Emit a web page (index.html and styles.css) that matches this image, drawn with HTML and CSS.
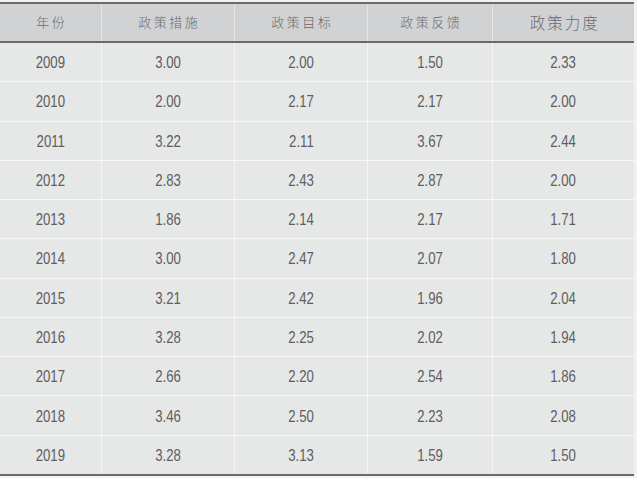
FILE: index.html
```html
<!DOCTYPE html>
<html lang="zh">
<head>
<meta charset="utf-8">
<link rel="stylesheet" href="styles.css">
</head>
<body>
<div class="tbl">
  <div class="row head">
    <div class="c">年份</div>
    <div class="c">政策措施</div>
    <div class="c">政策目标</div>
    <div class="c">政策反馈</div>
    <div class="c big">政策力度</div>
  </div>
  <div class="row"><div class="c"><span>2009</span></div><div class="c"><span>3.00</span></div><div class="c"><span>2.00</span></div><div class="c"><span>1.50</span></div><div class="c"><span>2.33</span></div></div>
  <div class="row"><div class="c"><span>2010</span></div><div class="c"><span>2.00</span></div><div class="c"><span>2.17</span></div><div class="c"><span>2.17</span></div><div class="c"><span>2.00</span></div></div>
  <div class="row"><div class="c"><span>2011</span></div><div class="c"><span>3.22</span></div><div class="c"><span>2.11</span></div><div class="c"><span>3.67</span></div><div class="c"><span>2.44</span></div></div>
  <div class="row"><div class="c"><span>2012</span></div><div class="c"><span>2.83</span></div><div class="c"><span>2.43</span></div><div class="c"><span>2.87</span></div><div class="c"><span>2.00</span></div></div>
  <div class="row"><div class="c"><span>2013</span></div><div class="c"><span>1.86</span></div><div class="c"><span>2.14</span></div><div class="c"><span>2.17</span></div><div class="c"><span>1.71</span></div></div>
  <div class="row"><div class="c"><span>2014</span></div><div class="c"><span>3.00</span></div><div class="c"><span>2.47</span></div><div class="c"><span>2.07</span></div><div class="c"><span>1.80</span></div></div>
  <div class="row"><div class="c"><span>2015</span></div><div class="c"><span>3.21</span></div><div class="c"><span>2.42</span></div><div class="c"><span>1.96</span></div><div class="c"><span>2.04</span></div></div>
  <div class="row"><div class="c"><span>2016</span></div><div class="c"><span>3.28</span></div><div class="c"><span>2.25</span></div><div class="c"><span>2.02</span></div><div class="c"><span>1.94</span></div></div>
  <div class="row"><div class="c"><span>2017</span></div><div class="c"><span>2.66</span></div><div class="c"><span>2.20</span></div><div class="c"><span>2.54</span></div><div class="c"><span>1.86</span></div></div>
  <div class="row"><div class="c"><span>2018</span></div><div class="c"><span>3.46</span></div><div class="c"><span>2.50</span></div><div class="c"><span>2.23</span></div><div class="c"><span>2.08</span></div></div>
  <div class="row last"><div class="c"><span>2019</span></div><div class="c"><span>3.28</span></div><div class="c"><span>3.13</span></div><div class="c"><span>1.59</span></div><div class="c"><span>1.50</span></div></div>
</div>
</body>
</html>
```
FILE: styles.css
```css
html, body {
  margin: 0;
  padding: 0;
  background: #f2f2f2;
}
body {
  padding-top: 2px;
}
.tbl {
  width: 634px;
  border-top: 2px solid #6a6a6a;
  border-bottom: 2px solid #6a6a6a;
  background: #e6e7e7;
}
.row {
  display: grid;
  grid-template-columns: 101px 133px 133px 125px 142px;
  height: 39.27px;
  box-sizing: border-box;
  border-bottom: 1px solid #f7f7f7;
}
.row.last {
  border-bottom: none;
  height: 38.3px;
}
.row.head {
  height: 39px;
  background: #d1d2d4;
  border-bottom: 2px solid #6a6a6a;
}
.c {
  display: flex;
  align-items: center;
  justify-content: center;
  font-family: "Liberation Sans", Arial, sans-serif;
  font-size: 16.5px;
  color: #5e5e5e;
}
.c span {
  display: inline-block;
  transform: scaleX(0.8);
  padding-top: 1px;
}
.c + .c {
  border-left: 1px solid #f4f4f4;
}
.head .c + .c {
  border-left-color: #e6e6e6;
}
.head .c {
  font-family: "Noto Sans CJK SC", sans-serif;
  font-weight: 300;
  font-size: 13px;
  letter-spacing: 2.5px;
  padding-left: 2.5px;
  color: #6a6a6a;
  padding-bottom: 2px;
}
.head .c.big {
  font-size: 15.5px;
  letter-spacing: 2px;
}
```
